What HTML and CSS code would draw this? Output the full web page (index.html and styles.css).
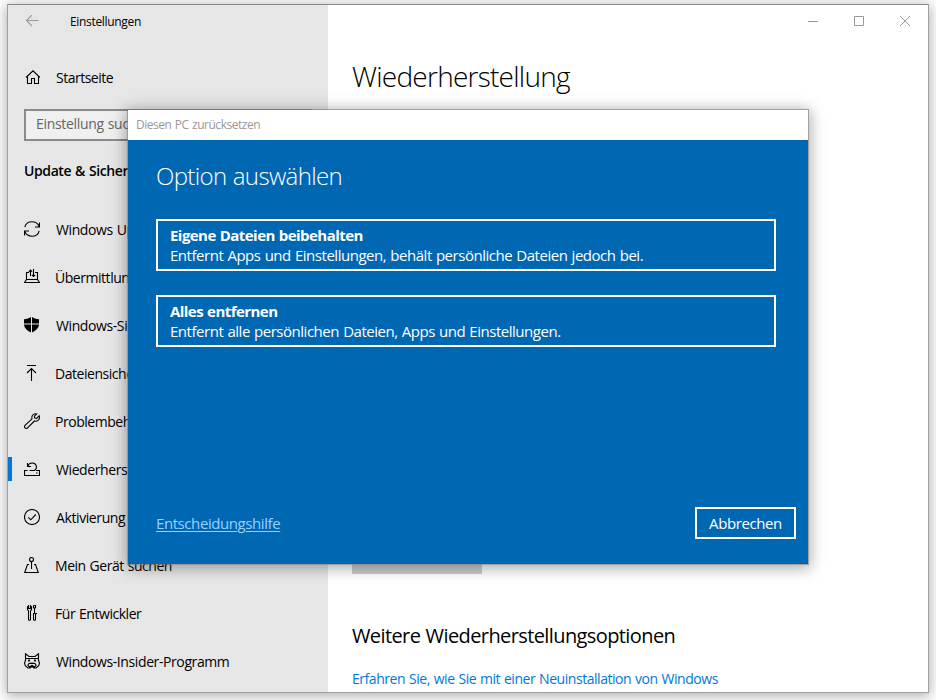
FILE: index.html
```
<!DOCTYPE html>
<html lang="de">
<head>
    <meta charset="UTF-8">
    <title>Einstellungen</title>
    <link rel="stylesheet" href="styles.css">
</head>
<body>
    <div class="window">
        <div class="sidebar">
            <div class="titlebar">
                <svg class="back" viewBox="0 0 14 12"><path d="M12.500 5.500H.5M6 0L.5 5.500l5.500 5.500"/></svg>
                <span>Einstellungen</span>
            </div>
            <a class="item home">
                <svg class="icon" viewBox="0 0 16 16"><path d="M3.500 7V14.500H7.500V9.500H10.500V14.500H14.500V7M2 8.500L9 1.800L16 8.500"/></svg>
                <span>Startseite</span>
            </a>
            <div class="search">Einstellung suchen</div>
            <div class="section">Update &amp; Sicherheit</div>
            <div class="nav">
                <a class="item">
                    <svg class="icon" viewBox="0 0 16 16"><path d="M.8 6.200C1.600 2.900 4.500.8 8 .8c3.200 0 6 1.900 7.200 4.700M15.500 1.500v4.500h-4.500M15.200 9.800c-.8 3.300-3.700 5.400-7.200 5.400-3.200 0-6-1.900-7.200-4.700M.5 14.500V10h4.500"/></svg>
                    <span>Windows Update</span>
                </a>
                <a class="item shift">
                    <svg class="icon" viewBox="0 0 16 16"><path d="M5 3.500H2.500v7.500M11 3.500h2.500v7.500M2.500 10.500h11l2 3H.5zM6.500 7V1M4.800 2.800L6.500 1l1.500 1.700M9.500 0v7.500M8 5.800l1.500 1.700 1.700-1.700"/></svg>
                    <span>Übermittlungsoptimierung</span>
                </a>
                <a class="item">
                    <svg class="icon solid" viewBox="0 0 16 16"><path d="M0 2.200C3 2.100 5.300 1.200 7 0v6.600H0zM8 0c1.700 1.200 4 2.100 7 2.200v4.400H8zM0 7.600h7v8C3.300 13.700.5 11.500 0 7.600zM8 7.600h7c-.5 3.900-3.300 6.100-7 8z"/></svg>
                    <span>Windows-Sicherheit</span>
                </a>
                <a class="item shift">
                    <svg class="icon" viewBox="0 0 16 16"><path d="M3 .5h9M7.500 16V3.500M3 8l4.500-4.500L12 8"/></svg>
                    <span>Dateiensicherung</span>
                </a>
                <a class="item shift">
                    <svg class="icon" viewBox="0 0 16 16"><path d="M12.800.9C10.500.1 7.800 1.800 7.800 4.400c0 .5.1 1 .2 1.400L1 12.300c-1.700 1.700.9 4.300 2.600 2.600L10.400 8c2.700.9 5.400-1.200 5.100-4l-.3-1.100-2.600 2.500-1.900-.3-.3-1.900z"/></svg>
                    <span>Problembehandlung</span>
                </a>
                <a class="item active">
                    <svg class="icon" viewBox="0 0 16 16"><path d="M3.500 9.500H.5v5h15v-5H12M3.500 2v3.500H7M3.700 5.300C5 1.200 11 .6 12.300 4.900c.5 1.800-.3 3.500-1.800 4.600H5.500M12 12h1.500"/></svg>
                    <span>Wiederherstellung</span>
                </a>
                <a class="item">
                    <svg class="icon" viewBox="0 0 16 16"><circle cx="8" cy="8" r="7.500"/><path d="M4.300 8.300l2.500 2.500 5-5.300"/></svg>
                    <span>Aktivierung</span>
                </a>
                <a class="item shift">
                    <svg class="icon" viewBox="0 0 16 16"><circle cx="7.500" cy="2.500" r="2"/><path d="M7.500 4.500V12M5 7.500H3.500L.7 15.500h13.600L11.500 7.500H10"/></svg>
                    <span>Mein Gerät suchen</span>
                </a>
                <a class="item shift">
                    <svg class="icon" viewBox="0 0 16 16"><path d="M4.500.8L3.500 2v2.500l1 1.500v8.200c0 1.600 2 1.600 2 0V6l1-1.500V2l-1-1.200v2.700h-2zM9.500.5h2v2l-1 1v5M10.500 3.500l-1-1v-2M9 8.500h4M9.500 8.500v5.700c0 1.600 2 1.600 2 0V8.500"/></svg>
                    <span>Für Entwickler</span>
                </a>
                <a class="item">
                    <svg class="icon" viewBox="0 0 16 16"><path d="M1.500 8V.8L5 3.500h6L14.500.8V8M1.500 5.500h13M1.500 7.500L.5 10l.8 2.800L4 15h2l2-1.500 2 1.500h2l2.700-2.200.8-2.800-1-2.500M4 12.500c0-2 1.500-2.500 4-2.500s4 .5 4 2.500L10.500 14 8 12.500 5.500 14zM6.500 10.500h3"/><path class="eyes" d="M5 6.500v2M11 6.500v2"/></svg>
                    <span>Windows-Insider-Programm</span>
                </a>
            </div>
        </div>
        <div class="main">
            <div class="controls">
                <svg viewBox="0 0 11 11"><path d="M0 5.500h10"/></svg>
                <svg viewBox="0 0 11 11"><path d="M.5.5h9v9h-9z"/></svg>
                <svg viewBox="0 0 11 11"><path d="M0 0l10 10M10 0L0 10"/></svg>
            </div>
            <h1>Wiederherstellung</h1>
            <div class="restart"></div>
            <h2>Weitere Wiederherstellungsoptionen</h2>
            <a class="link">Erfahren Sie, wie Sie mit einer Neuinstallation von Windows</a>
        </div>
    </div>

    <div class="dialog">
        <div class="dialog-title">Diesen PC zurücksetzen</div>
        <div class="dialog-body">
            <div class="dialog-heading">Option auswählen</div>
            <div class="options">
                <div class="option">
                    <b>Eigene Dateien beibehalten</b>
                    <span>Entfernt Apps und Einstellungen, behält persönliche Dateien jedoch bei.</span>
                </div>
                <div class="option">
                    <b>Alles entfernen</b>
                    <span>Entfernt alle persönlichen Dateien, Apps und Einstellungen.</span>
                </div>
            </div>
            <div class="dialog-footer">
                <a class="help">Entscheidungshilfe</a>
                <button class="cancel">Abbrechen</button>
            </div>
        </div>
    </div>
</body>
</html>
```
FILE: styles.css
```
* {
    box-sizing: border-box;
}
body {
    margin: 0;
    padding: 4px 7px;
    height: 700px;
    overflow: hidden;
    background-color: #fff;
    color: #000;
    font-family: "Open Sans", "Noto Sans", sans-serif;
    font-size: 14px;
    letter-spacing: -0.4px;
    word-spacing: 0.7px;
    white-space: nowrap;
}
svg {
    fill: none;
    stroke: #000;
    stroke-width: 1.1;
    flex-shrink: 0;
}

/* settings window */
.window {
    display: flex;
    width: 922px;
    height: 689px;
    border: 1px solid #a0a0a0;
    border-top-color: #8a8a8a;
    box-shadow: 0 2px 12px 1px rgba(0, 0, 0, 0.32);
}
.sidebar {
    width: 320px;
    background-color: #e6e6e6;
}
.titlebar {
    display: flex;
    align-items: center;
    gap: 30px;
    height: 33px;
    padding-left: 18px;
    font-size: 12px;
    letter-spacing: -0.32px;
}
.back {
    width: 14px;
    height: 12px;
    margin-top: -1px;
    stroke: #999;
}
.item {
    display: flex;
    align-items: center;
    gap: 16px;
    height: 48px;
    padding-left: 16px;
}
.item span {
    margin-top: -2px;
}
.shift {
    gap: 15px;
    letter-spacing: -0.46px;
}
.home {
    margin-top: 16px;
    letter-spacing: -0.5px;
}
.icon {
    width: 16px;
    height: 16px;
    margin-top: -2px;
}
.solid {
    fill: #000;
    stroke: none;
}
.eyes {
    stroke-width: 1.8;
}
.search {
    height: 32px;
    margin: 7px 16px 0;
    padding-left: 10px;
    border: 2px solid #8a8a8a;
    background-color: #f0f0f0;
    color: #666;
    line-height: 26px;
    letter-spacing: -0.32px;
}
.section {
    height: 65px;
    padding-left: 16px;
    font-weight: 600;
    line-height: 60px;
}
.active::before {
    content: "";
    width: 4px;
    height: 24px;
    margin: -2px -4px 0 -16px;
    background-color: #0078d7;
}

.main {
    display: flex;
    flex-direction: column;
    align-items: flex-start;
    flex: 1;
    padding-left: 24px;
    background-color: #fff;
}
.controls {
    display: flex;
    align-self: flex-end;
    height: 33px;
}
.controls svg {
    width: 11px;
    height: 11px;
    margin: 11px 17px 0 18px;
    stroke: #999;
    stroke-width: 1;
}
h1 {
    margin: 18px 0 0;
    font-size: 28px;
    font-weight: 300;
    line-height: 40px;
    letter-spacing: -0.75px;
}
.restart {
    width: 130px;
    height: 32px;
    margin-top: 446px;
    background-color: #ccc;
}
h2 {
    margin: 46px 0 0;
    font-size: 20px;
    font-weight: 400;
    line-height: 32px;
    letter-spacing: -0.6px;
}
.link {
    margin-top: 17px;
    color: #0078d7;
    line-height: 20px;
    letter-spacing: -0.46px;
}

/* reset dialog over the window */
.dialog {
    position: absolute;
    left: 127px;
    top: 109px;
    width: 682px;
    height: 456px;
    border: 1px solid rgba(110, 110, 110, 0.65);
    background-clip: padding-box;
    box-shadow: 0 2px 14px 1px rgba(0, 0, 0, 0.35);
}
.dialog-title {
    height: 30px;
    padding-left: 8px;
    background-color: #fff;
    color: #999;
    font-size: 12px;
    line-height: 30px;
    letter-spacing: -0.47px;
}
.dialog-body {
    display: flex;
    flex-direction: column;
    height: 424px;
    padding: 19px 12px 25px 28px;
    background-color: #0067b3;
    color: #fff;
    font-size: 15px;
    letter-spacing: -0.47px;
}
.dialog-heading {
    font-size: 24px;
    font-weight: 300;
    line-height: 34px;
    letter-spacing: -0.64px;
}
.options {
    display: flex;
    flex-direction: column;
    gap: 24px;
    margin: 26px 20px 0 0;
}
.option {
    display: flex;
    flex-direction: column;
    height: 52px;
    padding: 4px 12px;
    border: 2px solid #fff;
    line-height: 20px;
}
.option b {
    letter-spacing: -0.55px;
}
.dialog-footer {
    display: flex;
    align-items: center;
    justify-content: space-between;
    margin-top: auto;
}
.help {
    color: #99d1ff;
    text-decoration: underline;
    text-underline-offset: 2px;
    letter-spacing: -0.42px;
}
.cancel {
    width: 101px;
    height: 32px;
    padding: 0;
    border: 2px solid #fff;
    background: none;
    color: #fff;
    font: inherit;
    letter-spacing: -0.4px;
}
```
